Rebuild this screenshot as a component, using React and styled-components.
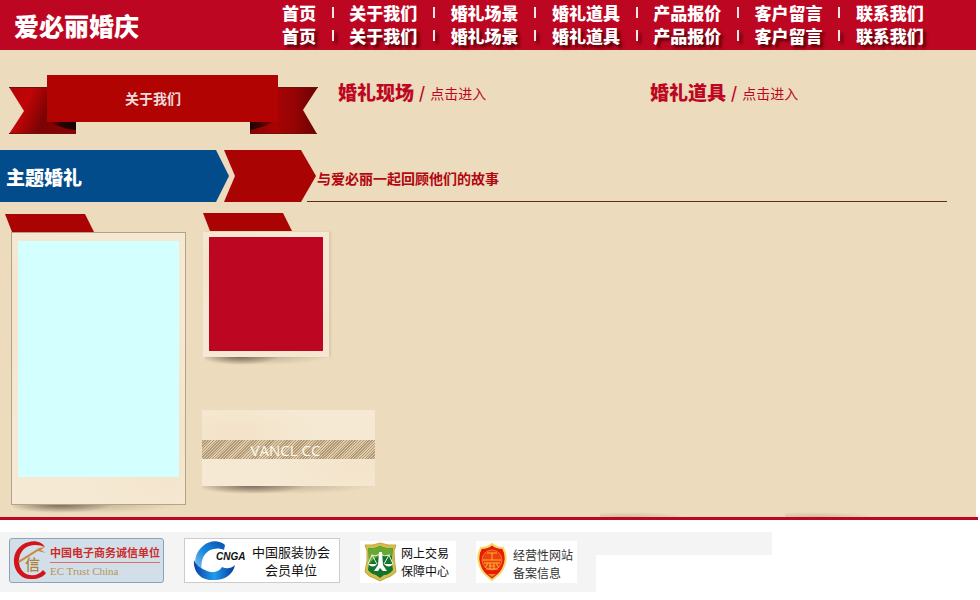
import React from "react";
import styled, { createGlobalStyle, css } from "styled-components";

const GlobalStyle = createGlobalStyle`
  * { box-sizing: border-box; }
  body {
    margin: 0;
    background: #fff;
    font-family: "Noto Sans CJK SC", "Noto Sans", sans-serif;
  }
  h1, h2, h3, p { margin: 0; }
  a { color: inherit; text-decoration: none; }
`;

const Header = styled.header`
  display: flex;
  align-items: center;
  height: 50px;
  margin-right: 4px;
  padding: 0 52px 0 14px;
  background: #bd0722;
  color: #fff;
`;

const Logo = styled.h1`
  flex: 0 0 268px;
  font-size: 25px;
  font-weight: 900;
  line-height: 48px;
`;

const Menus = styled.div`
  flex: 1;
  padding-bottom: 2px;
`;

const Nav = styled.nav`
  display: flex;
  justify-content: space-between;
  align-items: center;
  height: 23px;
  font-size: 17px;
  font-weight: 900;
  line-height: 23px;
  white-space: nowrap;
  ${(p) =>
    p.$shadow &&
    css`
      text-shadow: 3px 3px 3px rgba(60, 0, 0, 0.8);
    `}
`;

const Divider = styled.span`
  width: 2px;
  height: 11px;
  background: #f8e4e4;
  box-shadow: ${(p) => (p.$shadow ? "3px 3px 3px rgba(60, 0, 0, 0.7)" : "none")};
`;

const Main = styled.main`
  margin-right: 4px;
  padding-top: 25px;
  background:
    radial-gradient(ellipse at 30% 100%, #cdbd9f, transparent 70%) 600px 100% / 90px 5px no-repeat,
    radial-gradient(ellipse at 30% 100%, #cdbd9f, transparent 70%) 785px 100% / 95px 5px no-repeat,
    #ecdbbd;
`;

const Intro = styled.section`
  display: grid;
  grid-template-columns: 329px 312px 1fr;
  padding-left: 9px;
  height: 75px;
`;

const Ribbon = styled.a`
  display: grid;
  grid-template-columns: 309px;
  align-items: start;
  height: 59px;
  > * {
    grid-area: 1 / 1;
  }
`;

const RibbonLabel = styled.span`
  margin: 0 40px 0 38px;
  padding-right: 19px;
  background: #b20303;
  color: #ecdcdc;
  font-size: 14px;
  font-weight: 700;
  line-height: 47px;
  text-align: center;
`;

const Heading = styled.div`
  display: flex;
  align-items: center;
  gap: 5px;
  height: 34px;
  color: #bd0722;
  line-height: 34px;
`;

const HeadingTitle = styled.h2`
  font-size: 19px;
  font-weight: 900;
`;

const Slash = styled.span`
  font-size: 16px;
  font-weight: 700;
`;

const Enter = styled.a`
  padding-top: 2px;
  font-size: 14px;
  font-weight: 400;
`;

const ThemeBar = styled.section`
  display: flex;
  height: 52px;
`;

const ThemeTitle = styled.h2`
  width: 229px;
  padding: 1px 6px;
  background: #034c8b;
  clip-path: polygon(0 0, 216px 0, 100% 50%, 216px 100%, 0 100%);
  color: #fff;
  font-size: 19px;
  font-weight: 900;
  line-height: 52px;
`;

const RedArrow = styled.div`
  width: 92px;
  margin-left: -5px;
  background: #aa0303;
  clip-path: polygon(0 0, 77px 0, 100% 50%, 77px 100%, 0 100%, 11px 50%);
`;

const Story = styled.p`
  flex: 1;
  margin: 0 29px 0 -9px;
  padding: 3px 0 0 10px;
  border-bottom: 1px solid #593020;
  color: #b20710;
  font-size: 14px;
  font-weight: 700;
  line-height: 51px;
`;

const Gallery = styled.section`
  display: grid;
  grid-template-columns: 197px 1fr;
  padding: 11px 0 0 5px;
  height: 315px;
`;

const Column = styled.div`
  display: flex;
  flex-direction: column;
  align-items: flex-start;
`;

const Tab = styled.div`
  width: 89px;
  height: 18px;
  margin: ${(p) => p.$margin};
  background: #aa0303;
  clip-path: polygon(0 0, 80px 0, 100% 100%, 7px 100%);
`;

const paper = css`
  background:
    radial-gradient(ellipse at 20% 30%, rgba(243, 222, 195, 0.7), transparent 40%),
    radial-gradient(ellipse at 90% 75%, rgba(243, 222, 195, 0.5), transparent 40%),
    #f5e9d3;
`;

const Polaroid = styled.figure`
  ${paper}
  width: 175px;
  margin: 0 0 0 6px;
  padding: 8px 6px 27px;
  border: 1px solid #b3a387;
`;

const Snapshot = styled.figure`
  ${paper}
  width: 126px;
  margin: 1px 0 0 1px;
  padding: 5px 6px 6px;
  box-shadow: 2px 0 2px rgba(120, 100, 70, 0.15);
`;

const Photo = styled.div`
  height: ${(p) => p.$height};
  background: ${(p) => p.$color};
`;

const CardShadow = styled.div`
  width: ${(p) => p.$width};
  height: 10px;
  margin-left: ${(p) => p.$left};
  background:
    radial-gradient(ellipse 32% 80% at 28% 0, rgba(70, 50, 45, 0.6), transparent),
    radial-gradient(ellipse 50% 80% at 50% 0, rgba(110, 90, 65, 0.3), transparent);
`;

const BrandCard = styled.div`
  ${paper}
  width: 173px;
  margin-top: 43px;
  padding: 30px 0 27px;
`;

const BrandBand = styled.p`
  height: 19px;
  padding-right: 6px;
  background: repeating-linear-gradient(135deg, #b39a77 0 1px, #dccaaa 1px 2px);
  color: #fff9ea;
  font-family: "Open Sans", "Noto Sans", sans-serif;
  font-size: 15px;
  line-height: 20px;
  text-align: center;
`;

const Footer = styled.footer`
  margin-right: 2px;
  padding-top: 12px;
  border-top: 3px solid #bd0722;
`;

const FooterRow = styled.div`
  display: flex;
  align-items: flex-start;
`;

const Trust = styled.div`
  display: flex;
  align-items: flex-end;
  gap: 20px;
  width: 596px;
  height: 60px;
  padding: 0 0 9px 9px;
  background: #f4f4f4;
`;

const FooterTail = styled.div`
  width: 176px;
  height: 23px;
  background: #f4f4f4;
`;

const badge = css`
  display: flex;
  align-items: center;
  background: #fff;
  white-space: nowrap;
`;

const EcBadge = styled.a`
  ${badge}
  width: 155px;
  height: 45px;
  padding-left: 2px;
  border: 1px solid #86a5bd;
  border-radius: 3px;
  background: #d3dfe8;
`;

const EcName = styled.span`
  display: block;
  border-bottom: 1px solid #d8706a;
  color: #cc2b2b;
  font-size: 11px;
  font-weight: 700;
  line-height: 20px;
`;

const EcEnglish = styled.span`
  display: block;
  color: #b3935a;
  font-family: "Liberation Serif", serif;
  font-size: 11px;
  line-height: 17px;
`;

const CngaBadge = styled.a`
  ${badge}
  width: 156px;
  height: 45px;
  padding-left: 8px;
  gap: 5px;
  border: 1px solid #ccc;
`;

const TradeBadge = styled.a`
  ${badge}
  width: 96px;
  height: 42px;
  padding-left: 4px;
  gap: 4px;
`;

const RecordBadge = styled.a`
  ${badge}
  width: 101px;
  height: 42px;
  padding-left: 1px;
  gap: 6px;
`;

const BadgeText = styled.span`
  display: block;
  padding-top: ${(p) => p.$top || "0"};
  color: ${(p) => p.$color || "#111"};
  font-size: ${(p) => p.$size};
  line-height: 18px;
  text-align: ${(p) => p.$align || "left"};
`;

const menu = ["首页", "关于我们", "婚礼场景", "婚礼道具", "产品报价", "客户留言", "联系我们"];

function Menu({ shadow, label }) {
  return (
    <Nav $shadow={shadow} aria-label={label}>
      {menu.map((item, i) => (
        <React.Fragment key={item}>
          {i > 0 && <Divider $shadow={shadow} />}
          <a href="#">{item}</a>
        </React.Fragment>
      ))}
    </Nav>
  );
}

function RibbonTails() {
  return (
    <svg width="309" height="59" viewBox="0 0 309 59" aria-hidden="true">
      <defs>
        <linearGradient id="tailLeft" gradientUnits="userSpaceOnUse" x1="0" y1="12" x2="67" y2="40">
          <stop offset="0" stopColor="#b00408" />
          <stop offset="0.3" stopColor="#c00507" />
          <stop offset="0.6" stopColor="#7c0303" />
          <stop offset="1" stopColor="#8a0202" />
        </linearGradient>
        <linearGradient id="tailRight" x1="0" x2="1">
          <stop offset="0" stopColor="#850202" />
          <stop offset="0.35" stopColor="#a80304" />
          <stop offset="0.65" stopColor="#960304" />
          <stop offset="1" stopColor="#6a0303" />
        </linearGradient>
        <linearGradient id="foldLeft" x1="0" x2="1">
          <stop offset="0" stopColor="#800202" />
          <stop offset="0.5" stopColor="#250303" />
          <stop offset="1" stopColor="#170202" />
        </linearGradient>
        <linearGradient id="foldRight" x1="1" x2="0">
          <stop offset="0" stopColor="#9a0202" />
          <stop offset="0.6" stopColor="#400303" />
          <stop offset="1" stopColor="#1d0202" />
        </linearGradient>
      </defs>
      <path d="M0 12H67V59H0L15 36Z" fill="url(#tailLeft)" />
      <path d="M309 12H241V59H308L294 35Z" fill="url(#tailRight)" />
      <path d="M40 47H67V55Q54 54 40 47Z" fill="url(#foldLeft)" />
      <path d="M265 47H241V55Q254 53 265 47Z" fill="url(#foldRight)" />
      <path d="M0 58.500H67M241 58.500H308M0 12.500H38M269 12.500H309" stroke="#6f1208" strokeWidth="1" />
    </svg>
  );
}

function EcLogo() {
  return (
    <svg width="38" height="41" viewBox="0 0 38 41" aria-hidden="true">
      <path d="M33 7C30 2 23 0 17 2C7 4 1 13 2 23C3 33 11 40 20 39C26 39 31 37 34 33L31 30C28 34 23 36 18 35C11 34 7 28 7 21C7 14 11 8 17 6C23 4 28 5 33 7Z" fill="#d2141d" />
      <path d="M6 21L27 8L33 7L29 10L34 13L26 11L7 23Z" fill="#c98b4c" />
      <text x="13" y="30" fontFamily="Noto Sans CJK SC, sans-serif" fontWeight="500" fontSize="15" fill="#ab813d">信</text>
    </svg>
  );
}

function CngaLogo() {
  return (
    <svg width="54" height="42" viewBox="0 0 54 42" aria-hidden="true">
      <defs>
        <linearGradient id="cngaTop" x1="1" y1="0" x2="0" y2="1">
          <stop offset="0" stopColor="#0b4cab" />
          <stop offset="0.5" stopColor="#1687dd" />
          <stop offset="1" stopColor="#8fc9f2" />
        </linearGradient>
        <linearGradient id="cngaBottom" x1="0" y1="0" x2="1" y2="0">
          <stop offset="0" stopColor="#0a3ea6" />
          <stop offset="0.5" stopColor="#1f9cec" />
          <stop offset="1" stopColor="#06369a" />
        </linearGradient>
      </defs>
      <path d="M32 5C26 0 17 0 10 6C3 12 1 19 3 27L9 32C7 22 10 14 17 10C22 8 27 8 31 10Z" fill="url(#cngaTop)" />
      <path d="M1 20C0 30 6 40 19 40C31 41 40 35 42 25C38 29 33 29 29 27C26 32 19 34 12 30C7 28 3 25 1 20Z" fill="url(#cngaBottom)" />
      <text x="23" y="20" fontFamily="Liberation Sans, sans-serif" fontWeight="700" fontStyle="italic" fontSize="10" fill="#111">CNGA</text>
    </svg>
  );
}

function ScalesShield() {
  return (
    <svg width="33" height="40" viewBox="0 0 33 40" aria-hidden="true">
      <path d="M1 3Q9 4 16 1Q24 4 32 3L30 9Q30 17 32 30Q27 35 22 36L16 39L10 36Q5 35 1 30Q4 18 3 9Z" fill="#d5bd4b" stroke="#c0a73c" />
      <path d="M4 6Q11 7 16 4Q22 7 29 6Q27 17 29 28Q25 33 20 33L16 36L12 33Q7 32 4 28Q6 17 4 6Z" fill="#12752b" />
      <path d="M4 6Q11 7 16 4Q22 7 29 6L28 14Q15 10 5 22Z" fill="#67a832" />
      <path d="M7 13Q12 15 16 12Q20 15 26 13M8 13L4 22M8 13L13 22M25 13L20 22M25 13L29 22" stroke="#e9f3e0" fill="none" />
      <path d="M15 10H18L19 23L23 29H19L16 26L14 29H10L14 23Z" fill="#fff" />
      <path d="M4 22H13Q9 27 4 22M20 22H29Q25 27 20 22" fill="#fff" />
    </svg>
  );
}

function PoliceShield() {
  return (
    <svg width="30" height="40" viewBox="0 0 30 40" aria-hidden="true">
      <path d="M15 2Q19 6 26 6Q30 13 28 21Q26 29 21 33L15 38L9 33Q4 29 2 21Q0 13 4 6Q11 6 15 2Z" fill="#e71a0c" stroke="#f4dc62" strokeWidth="2" />
      <circle cx="15" cy="18" r="10" fill="#f0400f" stroke="#f07a1c" />
      <path d="M10 11H20M15 11V18M6 18H24M7 21H23M11 21L8 26M19 21L22 26M12 24H18M9 27H21M13 21V27M17 21V27" stroke="#f8b434" fill="none" />
      <path d="M11 32H19L15 35Z" fill="#e98c1c" />
    </svg>
  );
}

export default function App() {
  return (
    <>
      <GlobalStyle />
      <Header>
        <Logo>爱必丽婚庆</Logo>
        <Menus>
          <Menu label="主导航" />
          <Menu label="副导航" shadow />
        </Menus>
      </Header>
      <Main>
        <Intro>
          <Ribbon href="#">
            <RibbonTails />
            <RibbonLabel>关于我们</RibbonLabel>
          </Ribbon>
          {["婚礼现场", "婚礼道具"].map((title) => (
            <Heading key={title}>
              <HeadingTitle>{title}</HeadingTitle>
              <Slash>/</Slash>
              <Enter href="#">点击进入</Enter>
            </Heading>
          ))}
        </Intro>
        <ThemeBar>
          <ThemeTitle>主题婚礼</ThemeTitle>
          <RedArrow />
          <Story>与爱必丽一起回顾他们的故事</Story>
        </ThemeBar>
        <Gallery>
          <Column>
            <Tab $margin="1px 0 0" />
            <Polaroid>
              <Photo $height="236px" $color="#d3fffe" />
            </Polaroid>
            <CardShadow $width="164px" $left="8px" />
          </Column>
          <Column>
            <Tab $margin="0 0 0 1px" />
            <Snapshot>
              <Photo $height="114px" $color="#bd0722" />
            </Snapshot>
            <CardShadow $width="122px" $left="3px" />
            <BrandCard>
              <BrandBand>VANCL CC</BrandBand>
            </BrandCard>
            <CardShadow $width="170px" $left="0" />
          </Column>
        </Gallery>
      </Main>
      <Footer>
        <FooterRow>
          <Trust>
            <EcBadge href="#">
              <EcLogo />
              <span>
                <EcName>中国电子商务诚信单位</EcName>
                <EcEnglish>EC Trust China</EcEnglish>
              </span>
            </EcBadge>
            <CngaBadge href="#">
              <CngaLogo />
              <BadgeText $size="13px" $align="center">
                中国服装协会<br />会员单位
              </BadgeText>
            </CngaBadge>
            <TradeBadge href="#">
              <ScalesShield />
              <BadgeText $size="12px">
                网上交易<br />保障中心
              </BadgeText>
            </TradeBadge>
            <RecordBadge href="#">
              <PoliceShield />
              <BadgeText $size="12px" $color="#333" $top="3px">
                经营性网站<br />备案信息
              </BadgeText>
            </RecordBadge>
          </Trust>
          <FooterTail />
        </FooterRow>
      </Footer>
    </>
  );
}
